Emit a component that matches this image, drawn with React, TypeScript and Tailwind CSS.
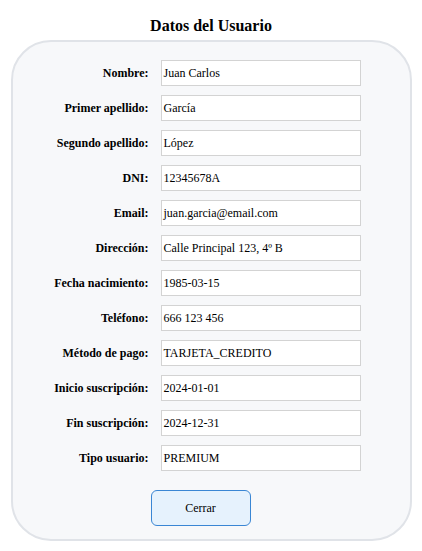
const fields = [
  { label: "Nombre:", value: "Juan Carlos" },
  { label: "Primer apellido:", value: "García" },
  { label: "Segundo apellido:", value: "López" },
  { label: "DNI:", value: "12345678A" },
  { label: "Email:", value: "juan.garcia@email.com" },
  { label: "Dirección:", value: "Calle Principal 123, 4º B" },
  { label: "Fecha nacimiento:", value: "1985-03-15" },
  { label: "Teléfono:", value: "666 123 456" },
  { label: "Método de pago:", value: "TARJETA_CREDITO" },
  { label: "Inicio suscripción:", value: "2024-01-01" },
  { label: "Fin suscripción:", value: "2024-12-31" },
  { label: "Tipo usuario:", value: "PREMIUM" },
];

export default function App() {
  return (
    <div className="w-[422px] bg-white pt-[16px] text-black font-['Liberation_Serif','Times_New_Roman',Times,serif]">
      <h2 className="text-center text-[16px] font-bold leading-[20px] mb-[4px]">Datos del Usuario</h2>

      {/* Card */}
      <div className="mx-auto w-[401px] rounded-[40px] border-2 border-[#e0e3e8] bg-[#f7f8fa] pt-[18px] pb-[13px]">
        <div className="flex flex-col gap-[9px]">
          {fields.map((f) => (
            <div key={f.label} className="flex items-center">
              <span className="w-[148px] shrink-0 pr-[12px] text-right text-[12px] font-bold leading-none whitespace-nowrap">
                {f.label}
              </span>
              <div className="flex h-[26px] w-[200px] items-center border border-[#d3d3d3] bg-white px-[2px] text-[12px]">
                {f.value}
              </div>
            </div>
          ))}
        </div>

        <button className="mt-[19px] ml-[138px] h-[36px] w-[100px] rounded-[6px] border border-[#3a86d4] bg-[#e6f2fd] text-[12px]">
          Cerrar
        </button>
      </div>
    </div>
  );
}
